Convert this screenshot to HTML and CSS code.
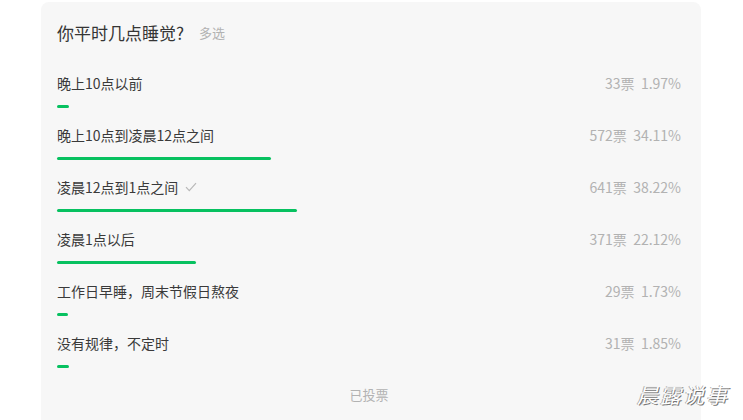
FILE: index.html
```html
<!DOCTYPE html>
<html lang="zh-CN">
<head>
<meta charset="utf-8">
<title>投票</title>
<link rel="stylesheet" href="styles.css">
</head>
<body>
<div class="page">
  <div class="card">
    <div class="title">你平时几点睡觉?<span class="tag">多选</span></div>
    <ul class="options">
      <li class="option">
        <div class="row"><span class="label">晚上10点以前</span><span class="stat">33票&nbsp;&nbsp;1.97%</span></div>
        <div class="track"><div class="bar" style="width:1.97%"></div></div>
      </li>
      <li class="option">
        <div class="row"><span class="label">晚上10点到凌晨12点之间</span><span class="stat">572票&nbsp;&nbsp;34.11%</span></div>
        <div class="track"><div class="bar" style="width:34.11%"></div></div>
      </li>
      <li class="option">
        <div class="row"><span class="label">凌晨12点到1点之间<svg class="check" width="12" height="10" viewBox="0 0 12 10"><path d="M1 5.2 L4.3 8.6 L11 1.2" fill="none" stroke="#b8b8b8" stroke-width="1.2"/></svg></span><span class="stat">641票&nbsp;&nbsp;38.22%</span></div>
        <div class="track"><div class="bar" style="width:38.22%"></div></div>
      </li>
      <li class="option">
        <div class="row"><span class="label">凌晨1点以后</span><span class="stat">371票&nbsp;&nbsp;22.12%</span></div>
        <div class="track"><div class="bar" style="width:22.12%"></div></div>
      </li>
      <li class="option">
        <div class="row"><span class="label">工作日早睡，周末节假日熬夜</span><span class="stat">29票&nbsp;&nbsp;1.73%</span></div>
        <div class="track"><div class="bar" style="width:1.73%"></div></div>
      </li>
      <li class="option">
        <div class="row"><span class="label">没有规律，不定时</span><span class="stat">31票&nbsp;&nbsp;1.85%</span></div>
        <div class="track"><div class="bar" style="width:1.85%"></div></div>
      </li>
    </ul>
    <div class="voted">已投票</div>
  </div>
  <div class="watermark">晨露说事</div>
</div>
</body>
</html>
```

FILE: styles.css
```css
html, body {
  margin: 0;
  padding: 0;
  background: #ffffff;
}
body {
  font-family: "Noto Sans CJK SC", "Noto Sans", sans-serif;
  width: 743px;
  height: 420px;
  overflow: hidden;
}
.page {
  position: relative;
  width: 743px;
  height: 420px;
  padding-top: 2px;
  box-sizing: border-box;
}
.card {
  margin-left: 41px;
  width: 660px;
  height: 418px;
  box-sizing: border-box;
  background: #f7f7f7;
  border-radius: 8px 8px 0 0;
  padding: 19px 20px 0 16px;
}
.title {
  font-size: 17px;
  line-height: 24px;
  color: #353535;
  display: flex;
  align-items: center;
}
.tag {
  font-size: 13px;
  color: #b2b2b2;
  margin-left: 15px;
}
.options {
  list-style: none;
  margin: 28px 0 0;
  padding: 0;
}
.option {
  margin-bottom: 17px;
}
.row {
  display: flex;
  justify-content: space-between;
  align-items: center;
  height: 20px;
  font-size: 14px;
  line-height: 20px;
}
.label {
  color: #3a3a3a;
  display: flex;
  align-items: center;
}
.check {
  margin-left: 7px;
}
.stat {
  color: #b2b2b2;
}
.track {
  margin-top: 12px;
  width: 628px;
  height: 3px;
}
.bar {
  height: 3px;
  background: #07c160;
  border-radius: 2px;
}
.voted {
  text-align: center;
  font-size: 13px;
  line-height: 20px;
  color: #b2b2b2;
  margin-top: 9px;
}
.watermark {
  position: absolute;
  right: 14px;
  bottom: 14px;
  font-size: 21px;
  line-height: 24px;
  color: #ffffff;
  font-style: italic;
  letter-spacing: 2px;
  text-shadow: 1px 1px 0 #777, -1px 0 0 #aaa;
}
```
